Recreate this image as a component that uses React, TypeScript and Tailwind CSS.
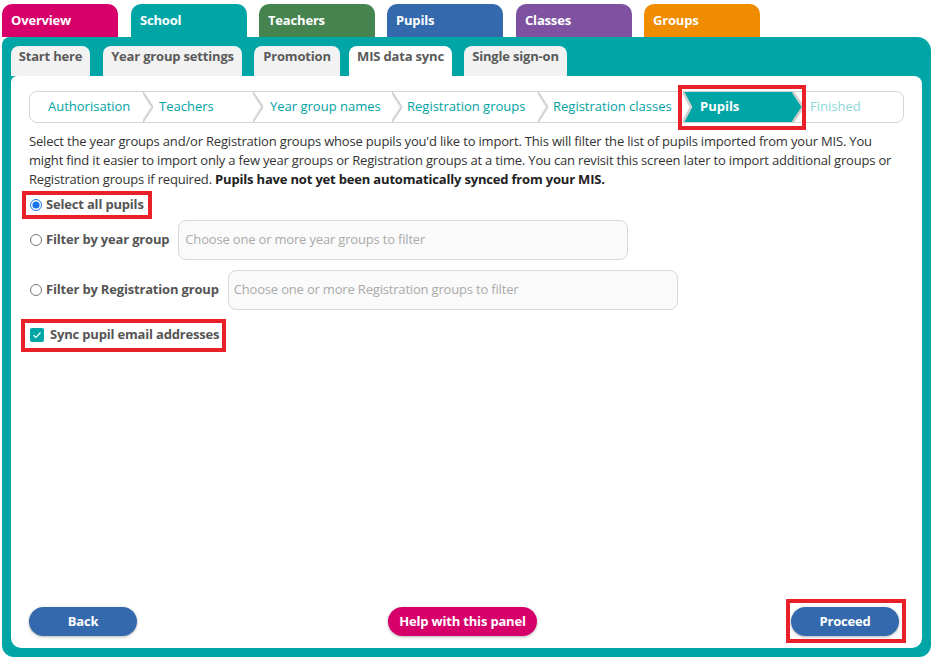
import React from "react";

const topTabs = [
  { label: "Overview", cls: "bg-[#d7006b] ml-[2px]" },
  { label: "School", cls: "bg-[#00a6a6] ml-[13px]" },
  { label: "Teachers", cls: "bg-[#46844f] ml-[12px]" },
  { label: "Pupils", cls: "bg-[#346aad] ml-[12px]" },
  { label: "Classes", cls: "bg-[#7e52a1] ml-[13px]" },
  { label: "Groups", cls: "bg-[#f08c00] ml-[12px]" },
];

const subTabs = [
  { label: "Start here", cls: "w-[79px] ml-0 bg-[#f2f2f2]" },
  { label: "Year group settings", cls: "w-[139px] ml-[13px] bg-[#f2f2f2]" },
  { label: "Promotion", cls: "w-[86px] ml-[12px] bg-[#f2f2f2]" },
  { label: "MIS data sync", cls: "w-[103px] ml-[9px] bg-white" },
  { label: "Single sign-on", cls: "w-[103px] ml-[12px] bg-[#f2f2f2]" },
];

function Chevron() {
  return (
    <svg width="10" height="30" viewBox="0 0 10 30" className="shrink-0">
      <polygon points="0,0 10,15 0,30 0,27 7.5,15 0,3" fill="#e6e6e6" />
      <polyline points="0,0 10,15 0,30" fill="none" stroke="#cdcdcd" strokeWidth="1.5" />
    </svg>
  );
}

function Crumb({ label, cls }: { label: string; cls: string }) {
  return (
    <div className={`h-full flex items-center text-[13px] tracking-normal text-[#00a3a3] whitespace-nowrap ${cls}`}>{label}</div>
  );
}

export default function App() {
  return (
    <div className="relative w-[934px] h-[664px] bg-white overflow-hidden font-['Open_Sans',sans-serif] tracking-[-0.18px]">
      {/* top tabs */}
      <div className="flex h-[37px] pt-[4px]">
        {topTabs.map((t) => (
          <div
            key={t.label}
            className={`w-[116px] h-[33px] rounded-t-[10px] pl-[9px] pt-[7px] text-[13px] leading-[18px] font-bold text-white ${t.cls}`}
          >
            {t.label}
          </div>
        ))}
      </div>

      {/* teal panel */}
      <div className="ml-[2px] w-[929px] h-[620px] bg-[#00a6a6] rounded-tr-[14px] rounded-tl-[8px] rounded-b-[12px] px-[9px] pt-[9px] pb-[9px] flex flex-col">
        <div className="flex h-[30px] shrink-0">
          {subTabs.map((s) => (
            <div
              key={s.label}
              className={`h-[30px] rounded-t-[8px] pt-[1px] text-center text-[13px] leading-[18px] font-bold text-[#5a5a5a] whitespace-nowrap ${s.cls}`}
            >
              {s.label}
            </div>
          ))}
        </div>

        <div className="flex-1 bg-white rounded-tl-[6px] rounded-tr-[8px] rounded-b-[10px] pt-[15px] pl-[18px] pr-[18px] flex flex-col">
          {/* breadcrumb */}
          <div className="h-[32px] border border-[#d5d5d5] rounded-[8px] flex items-stretch shrink-0">
            <Crumb label="Authorisation" cls="w-[113px] pl-[18px]" />
            <Chevron />
            <Crumb label="Teachers" cls="w-[100px] pl-[6px]" />
            <Chevron />
            <Crumb label="Year group names" cls="w-[129px] pl-[7px]" />
            <Chevron />
            <Crumb label="Registration groups" cls="w-[136px] pl-[5px]" />
            <Chevron />
            <Crumb label="Registration classes" cls="w-[135px] pl-[5px]" />
            <div className="relative w-[120px] h-full flex items-center pl-[17px] text-[13px] tracking-normal font-bold text-white">
              <svg width="120" height="30" viewBox="0 0 120 30" className="absolute left-0 top-0">
                <polygon points="0,0 110,0 120,15 110,30 0,30 8,15" fill="#00a6a6" />
                <polyline points="0,0 8,15 0,30" fill="none" stroke="#d0d0d0" strokeWidth="2.5" />
                <polyline points="110,0 120,15 110,30" fill="none" stroke="#d0d0d0" strokeWidth="2.5" />
              </svg>
              <span className="relative">Pupils</span>
            </div>
            <div className="h-full flex items-center pl-[7px] text-[13px] tracking-normal text-[#8ed8d8]">Finished</div>
          </div>

          {/* paragraph */}
          <p className="mt-[9px] text-[13px] leading-[19px] text-[#333]">
            Select the year groups and/or Registration groups whose pupils you'd like to import. This will filter the list of pupils imported from your MIS. You might find it easier to import only a few year groups or Registration groups at a time. You can revisit this screen later to import additional groups or Registration groups if required.{" "}
            <b className="font-bold text-[#222]">Pupils have not yet been automatically synced from your MIS.</b>
          </p>

          {/* options */}
          <div className="mt-[6px] h-[20px] flex items-center pl-[1px]">
            <input type="radio" checked readOnly className="w-[12px] h-[12px] m-0 accent-[#1a73e8]" />
            <span className="ml-[4px] text-[13px] font-bold text-[#555]">Select all pupils</span>
          </div>
          <div className="mt-[5px] h-[40px] flex items-center pl-[1px]">
            <input type="radio" readOnly className="w-[12px] h-[12px] m-0" />
            <span className="ml-[4px] text-[13px] font-bold text-[#555]">Filter by year group</span>
            <div className="ml-[9px] w-[450px] h-[40px] border border-[#d9d9d9] rounded-[8px] bg-[#fafafa] flex items-center pl-[6px] text-[13px] text-[#aaa]">
              Choose one or more year groups to filter
            </div>
          </div>
          <div className="mt-[10px] h-[40px] flex items-center pl-[1px]">
            <input type="radio" readOnly className="w-[12px] h-[12px] m-0" />
            <span className="ml-[4px] text-[13px] font-bold text-[#555]">Filter by Registration group</span>
            <div className="ml-[9px] w-[450px] h-[40px] border border-[#d9d9d9] rounded-[8px] bg-[#fafafa] flex items-center pl-[5px] text-[13px] text-[#aaa]">
              Choose one or more Registration groups to filter
            </div>
          </div>
          <div className="mt-[15px] h-[20px] flex items-center pl-[1px]">
            <div className="w-[14px] h-[14px] bg-[#00a6a6] rounded-[2px] flex items-center justify-center">
              <svg width="10" height="10" viewBox="0 0 10 10">
                <polyline points="1.5,5.2 4,7.5 8.5,2.5" fill="none" stroke="white" strokeWidth="1.2" />
              </svg>
            </div>
            <span className="ml-[6px] text-[13px] font-bold text-[#555]">Sync pupil email addresses</span>
          </div>

          <div className="flex-1" />

          {/* buttons */}
          <div className="flex items-center justify-between pr-[5px] pb-[12px]">
            <button className="w-[108px] h-[29px] rounded-full bg-[#346aad] text-white text-[13px] font-bold shadow-[0_1px_3px_rgba(0,0,0,0.3)]">
              Back
            </button>
            <button className="w-[149px] h-[29px] mr-[3px] rounded-full bg-[#d7006b] text-white text-[13px] font-bold shadow-[0_1px_3px_rgba(0,0,0,0.3)]">
              Help with this panel
            </button>
            <button className="w-[108px] h-[29px] rounded-full bg-[#346aad] text-white text-[13px] font-bold shadow-[0_1px_3px_rgba(0,0,0,0.3)]">
              Proceed
            </button>
          </div>
        </div>
      </div>

      {/* red highlight boxes */}
      <div className="absolute left-[678px] top-[85px] w-[128px] h-[45px] border-[4px] border-[#e8202a]" />
      <div className="absolute left-[22px] top-[191px] w-[130px] h-[28px] border-[4px] border-[#e8202a]" />
      <div className="absolute left-[21px] top-[319px] w-[205px] h-[33px] border-[4px] border-[#e8202a]" />
      <div className="absolute left-[786px] top-[599px] w-[120px] h-[44px] border-[4px] border-[#e8202a]" />
    </div>
  );
}
